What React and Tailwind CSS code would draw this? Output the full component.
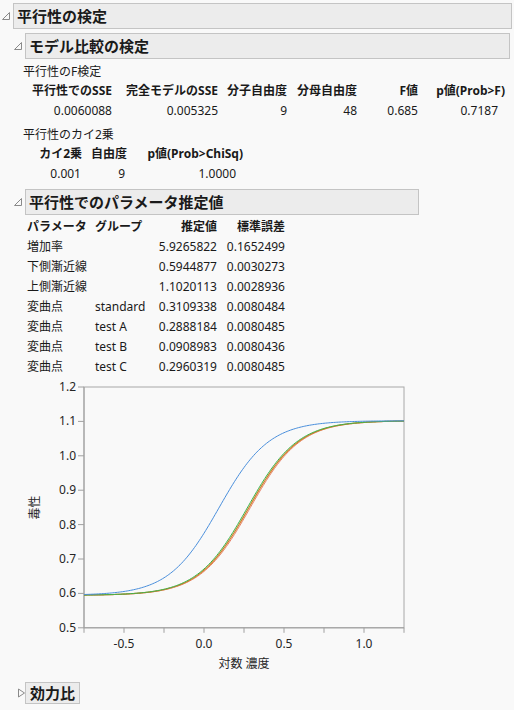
import React from 'react';

const font = { fontFamily: '"Noto Sans", "Noto Sans CJK JP", sans-serif' };

function Tri({ open = true }) {
  return (
    <svg width="10" height="10" viewBox="0 0 10 10" className="shrink-0">
      {open ? (
        <polygon points="8.5,1.5 8.5,8.5 1.5,8.5" fill="none" stroke="#8a8a8a" strokeWidth="1" />
      ) : (
        <polygon points="2.5,1 8.5,5 2.5,9" fill="none" stroke="#8a8a8a" strokeWidth="1" />
      )}
    </svg>
  );
}

function Header({ title, className = '', open = true }) {
  return (
    <div className={`flex items-center ${className}`}>
      <div className="w-[12px] flex justify-start">
        <Tri open={open} />
      </div>
      <div className="flex-1 h-[26px] flex items-center pl-[3px] bg-[#ececec] border border-[#c4c4c4] text-[15px] font-bold text-[#1a1a1a]">
        {title}
      </div>
    </div>
  );
}

const fCols = ['w-[88px]', 'w-[106px]', 'w-[69px]', 'w-[70px]', 'w-[61px]', 'w-[87px]'];
const fHead = ['平行性でのSSE', '完全モデルのSSE', '分子自由度', '分母自由度', 'F値', 'p値(Prob>F)'];
const fVals = ['0.0060088', '0.005325', '9', '48', '0.685', '0.7187'];

const cCols = ['w-[52px]', 'w-[45px]', 'w-[116px]'];
const cHead = ['カイ2乗', '自由度', 'p値(Prob>ChiSq)'];
const cVals = ['0.001', '9', '1.0000'];

const params = [
  ['増加率', '', '5.9265822', '0.1652499'],
  ['下側漸近線', '', '0.5944877', '0.0030273'],
  ['上側漸近線', '', '1.1020113', '0.0028936'],
  ['変曲点', 'standard', '0.3109338', '0.0080484'],
  ['変曲点', 'test A', '0.2888184', '0.0080485'],
  ['変曲点', 'test B', '0.0908983', '0.0080436'],
  ['変曲点', 'test C', '0.2960319', '0.0080485'],
];

const X0 = 83;
const Y0 = 10; // y of 1.2 inside svg
const sx = (v) => X0 + (v + 0.75) * 160;
const sy = (v) => Y0 + (1.2 - v) * 344;

// logistic curve as drawn in the plot
function curve(c, rate = 6.4) {
  const pts = [];
  for (let i = 0; i <= 200; i++) {
    const x = -0.75 + (2 * i) / 200;
    const y = 0.5944877 + (1.1020113 - 0.5944877) / (1 + Math.exp(-rate * (x - c)));
    pts.push(`${sx(x).toFixed(2)},${sy(y).toFixed(2)}`);
  }
  return pts.join(' ');
}

function Chart() {
  const yt = [1.2, 1.1, 1.0, 0.9, 0.8, 0.7, 0.6, 0.5];
  const xt = [-0.75, -0.5, -0.25, 0, 0.25, 0.5, 0.75, 1.0, 1.25];
  const xl = [-0.5, 0, 0.5, 1.0];
  const bottom = sy(0.5);
  return (
    <svg width="420" height="300" className="block" style={font}>
      <rect x={X0} y={Y0} width={320} height={bottom - Y0} fill="#f9f9f9" stroke="#a8a8a8" strokeWidth="1" />
      {yt.map((v) => (
        <g key={v}>
          <line x1={X0 - 6} x2={X0} y1={sy(v)} y2={sy(v)} stroke="#a0a0a0" />
          <text x={X0 - 8} y={sy(v) + 4} textAnchor="end" fontSize="12" fill="#262626">
            {v.toFixed(1)}
          </text>
        </g>
      ))}
      {xt.map((v) => (
        <line key={v} x1={sx(v)} x2={sx(v)} y1={bottom} y2={bottom + 5} stroke="#a0a0a0" />
      ))}
      {xl.map((v) => (
        <text key={v} x={sx(v)} y={bottom + 20} textAnchor="middle" fontSize="12" fill="#262626">
          {v.toFixed(1)}
        </text>
      ))}
      <line x1={X0} x2={X0} y1={Y0} y2={bottom} stroke="#a0a0a0" />
      <line x1={X0} x2={X0 + 320} y1={bottom} y2={bottom} stroke="#a0a0a0" />
      <polyline points={curve(0.288)} fill="none" stroke="#e8826b" strokeWidth="1" />
      <polyline points={curve(0.279)} fill="none" stroke="#d1802a" strokeWidth="1.2" />
      <polyline points={curve(0.27)} fill="none" stroke="#3cb44b" strokeWidth="1" />
      <polyline points={curve(0.093)} fill="none" stroke="#4a8fdc" strokeWidth="1" />
      <text x={243} y={bottom + 40} textAnchor="middle" fontSize="12" fill="#262626">
        対数 濃度
      </text>
      <text x={0} y={0} transform={`translate(38 ${sy(0.85)}) rotate(-90)`} textAnchor="middle" fontSize="12" fill="#262626">
        毒性
      </text>
    </svg>
  );
}

export default function App() {
  return (
    <div className="w-[514px] h-[710px] bg-[#f9f9f9] text-[12px] text-[#1a1a1a] overflow-hidden" style={font}>
      <div className="pt-[3px] pl-[1px] pr-[2px]">
        <Header title="平行性の検定" />
        <div className="pl-[12px] pr-[2px] mt-[4px]">
          <Header title="モデル比較の検定" />
        </div>

        <div className="pl-[22px]">
          <div className="h-[18px] mt-[4px] flex items-center">平行性のF検定</div>
          <div className="pl-[1px]">
            <div className="flex h-5 items-center font-bold">
              {fHead.map((h, i) => (
                <div key={h} className={`${fCols[i]} text-right whitespace-nowrap`}>{h}</div>
              ))}
            </div>
            <div className="flex h-5 items-center">
              {fVals.map((v, i) => (
                <div key={i} className={`${fCols[i]} text-right ${i === 5 ? 'pr-[7px]' : ''}`}>{v}</div>
              ))}
            </div>
          </div>

          <div className="h-[18px] mt-[5px] flex items-center">平行性のカイ2乗</div>
          <div className="pl-[7px]">
            <div className="flex h-5 items-center font-bold">
              {cHead.map((h, i) => (
                <div key={h} className={`${cCols[i]} text-right whitespace-nowrap`}>{h}</div>
              ))}
            </div>
            <div className="flex h-5 items-center">
              {cVals.map((v, i) => (
                <div key={i} className={`${cCols[i]} text-right ${i === 2 ? 'pr-[7px]' : i === 1 ? 'pr-[2px]' : 'pr-[1px]'}`}>{v}</div>
              ))}
            </div>
          </div>
        </div>

        <div className="pl-[12px] mt-[5px] w-[418px]">
          <Header title="平行性でのパラメータ推定値" />
        </div>
        <div className="pl-[26px] mt-[2px]">
          <div className="flex h-5 items-center font-bold">
            <div className="w-[68px]">パラメータ</div>
            <div className="w-[60px]">グループ</div>
            <div className="w-[62px] text-right">推定値</div>
            <div className="w-[68px] text-right">標準誤差</div>
          </div>
          {params.map((r, i) => (
            <div key={i} className="flex h-5 items-center">
              <div className="w-[68px] whitespace-nowrap">{r[0]}</div>
              <div className="w-[60px] whitespace-nowrap">{r[1]}</div>
              <div className="w-[62px] text-right">{r[2]}</div>
              <div className="w-[68px] text-right">{r[3]}</div>
            </div>
          ))}
        </div>

        <Chart />

        <div className="flex items-center mt-[5px] pl-[15px]">
          <div className="w-[9px]">
            <Tri open={false} />
          </div>
          <div className="h-[22px] flex items-center px-[4px] bg-[#ececec] border border-[#c4c4c4] text-[15px] font-bold">
            効力比
          </div>
        </div>
      </div>
    </div>
  );
}
